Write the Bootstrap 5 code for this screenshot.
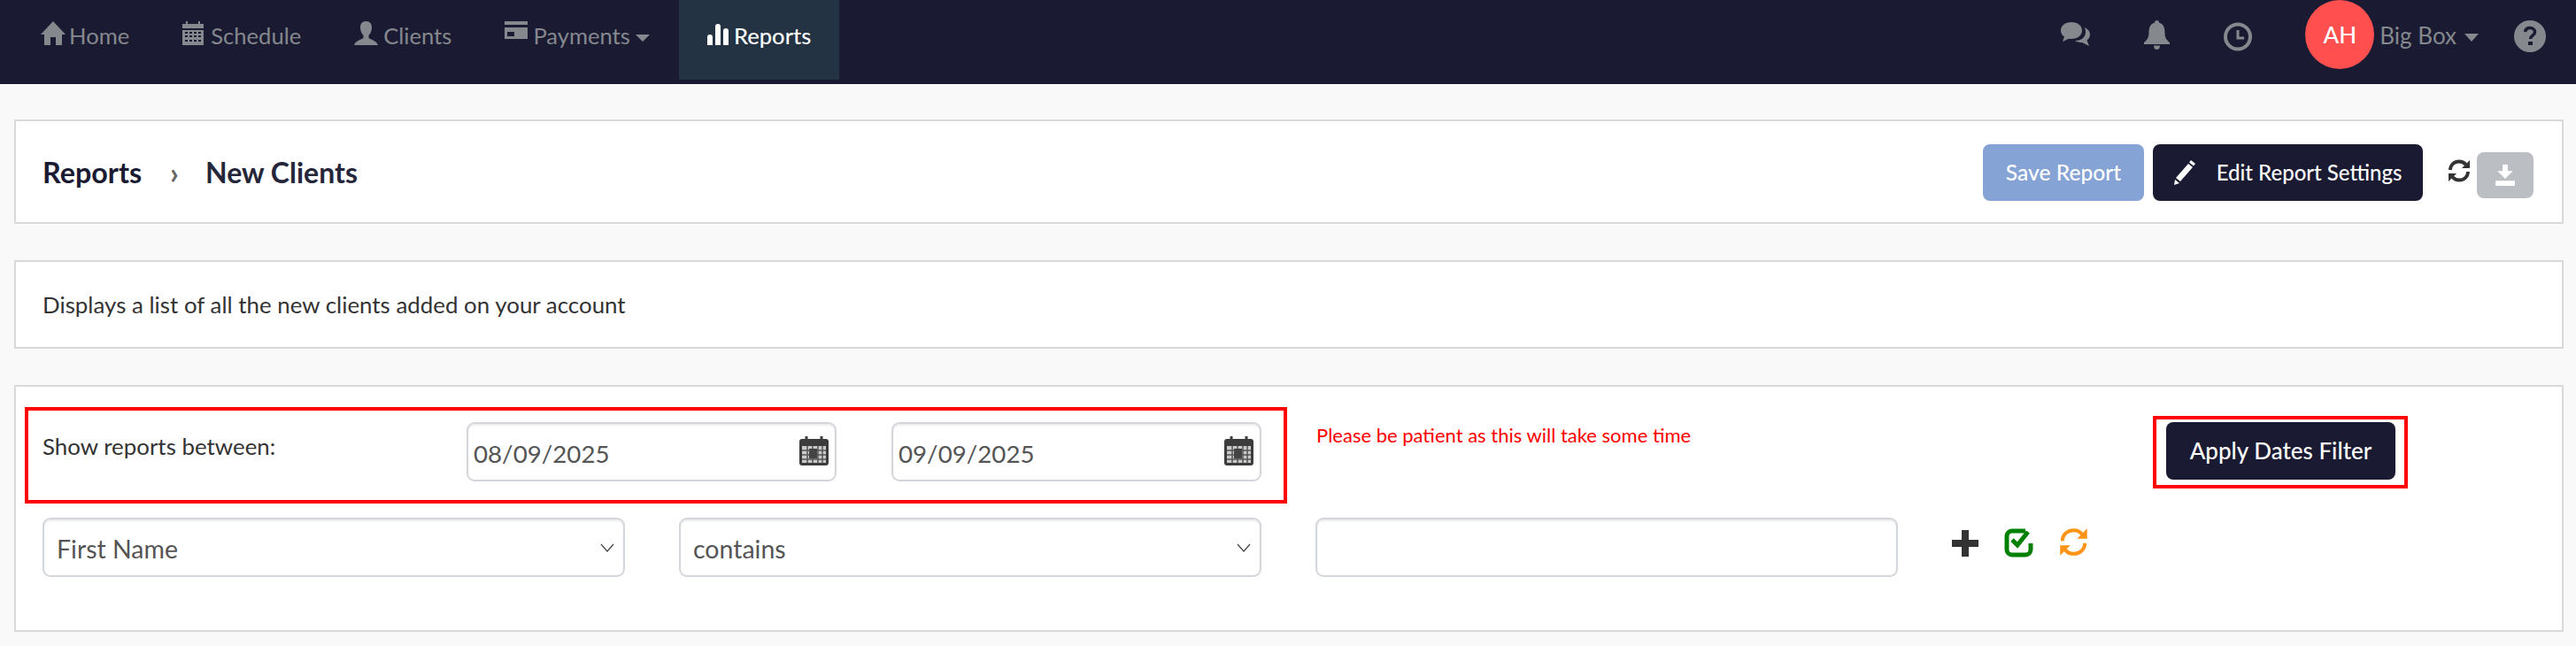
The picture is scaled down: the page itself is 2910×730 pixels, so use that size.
<!DOCTYPE html>
<html lang="en"><head><meta charset="utf-8"><title>New Clients</title>
<link rel="stylesheet" href="https://cdn.jsdelivr.net/npm/bootstrap@5.3.0/dist/css/bootstrap.min.css">
<style>
body{background:#f9f9f9;font-family:"Lato","Liberation Sans",sans-serif;color:#333;font-size:26px;min-width:2910px}
svg{display:block;flex:none}
.topbar{background:#1a1b33;height:95px;padding:0 34px 0 16px;display:flex;justify-content:space-between;align-items:flex-start;color:#85888c}
.topnav{display:flex;margin:0;padding:0;list-style:none}
.toplink{height:90px;padding:23px 30px 0;display:flex;gap:6px;align-items:flex-start;color:#85888c;text-decoration:none;line-height:34px;font-size:25.6px}
.toplink:hover{color:#85888c}
.toplink.current{background:#233343;color:#fff;padding:23px 32px 0 32px;font-weight:500}
.toplink svg{margin-top:1px}
.toplink .ico-home{margin-right:-2px}
.toplink .ico-sched{margin-right:2px}
.toplink .ico-caret{margin:16px 3px 0 0}
.toplink .ico-bars{margin-top:4px}
.rightnav{display:flex;align-items:flex-start}
.ico-chat{margin-top:25px}
.ico-bell{margin:23px 0 0 61px}
.ico-clock{margin:25px 0 0 61px}
.ico-help{margin:22px 0 0 40px}
.avatar{width:78px;height:78px;margin-left:60px;border-radius:50%;background:#ff4f4f;color:#fff;display:flex;align-items:center;justify-content:center;font-size:26px;font-weight:500}
.toplink.account{padding:23px 0 0 6px;height:auto;font-size:26px}
.toplink .ico-acaret{margin:15px 0 0 3px}
.panel{background:#fff;border:2px solid #d9d9d9;margin:0 14px 0 16px}
.panel-head{height:118px;margin-top:40px;padding:0 32px 0 30px;display:flex;align-items:center;justify-content:space-between}
.crumbs{font-size:32.3px;font-weight:700;color:#1a1b33;display:flex;align-items:center;margin-top:2px}
.crumbs .sep{color:#666;margin:0 30px 0 32px;font-weight:700;font-size:34px;line-height:1}
.crumbs .leaf{color:#25263a;font-size:32px}
.actions{display:flex;align-items:flex-start;margin-top:2px}
.btn-ink,.btn-save{height:64px;border-radius:8px;border:0;color:#fff;font-size:24.6px;font-weight:500;display:flex;align-items:center;justify-content:center;padding:0}
.btn-ink{background:#1a1b33}.btn-ink:hover{background:#1a1b33;color:#fff}
.btn-save{background:#85a3d4;width:182px;margin-right:10px}
.btn-edit{width:305px;gap:24px;margin-right:28px;font-size:24px}
.btn-dl{background:#bbbec2;width:64px;height:52px;border-radius:8px;display:flex;align-items:center;justify-content:center;margin:9px 0 0 7px;border:0;padding:0}
.spin{margin-top:17px}
.panel-desc{height:100px;margin-top:41px;padding:0 30px;display:flex;align-items:center;font-size:25.9px;color:#333}
.panel-filter{height:279px;margin-top:41px;padding:23px 0 0 10px}
.daterow{display:flex;align-items:flex-start}
.redbox{border:4px solid #f00}
.datebox{width:1426px;height:109px;padding:13px 25px 0 16px;display:flex}
.datebox .lbl{width:479px;line-height:34px;padding-top:10px;font-size:25.9px}
.datefield{position:relative;width:418px}
.datefield+.datefield{margin-left:62px}
.datefield svg{position:absolute;right:9px;top:16px}
.form-control,.form-select{height:67px;border:2px solid #d3d6da;border-radius:9px;font-size:27.7px;color:#555;box-shadow:inset 0 2px 2px rgba(0,0,0,.075);padding:4px 6px 0;font-family:inherit}
.form-select{font-size:28.5px;padding-left:14px;background-image:url("data:image/svg+xml,%3Csvg xmlns='http://www.w3.org/2000/svg' viewBox='0 0 16 10'%3E%3Cpath d='M1 1l7 8 7-8' fill='none' stroke='%23444' stroke-width='1.2'/%3E%3C/svg%3E");background-size:16px 10px;background-position:right 10px center}
.patience{color:#f00;font-size:22px;width:945px;margin-left:33px;padding-top:17px;line-height:30px}
.applybox{width:288px;height:82px;margin-top:10px;padding:3px 11px}
.btn-apply{width:259px;height:65px;font-size:26px}
.critrow{display:flex;margin-top:16px;padding-left:20px;gap:61px}
.critrow>.critcell{width:658px}
.tools{display:flex;gap:29px;align-items:flex-start;padding-top:14px}
.ico-check{margin-top:-2px}
.ico-sync{margin-top:-4px}
</style></head><body>

<nav class="topbar">
<ul class="topnav">
<li><a class="toplink" href="#"><svg class="ico-home" width="28" height="28" viewBox="0 0 28 28" fill="#85888c"><path d="M14 0L28 15h-4v12h-7v-9h-6v9H4V15H0z"/></svg>Home</a></li>
<li><a class="toplink" href="#"><svg class="ico-sched" width="24" height="27" viewBox="0 0 24 27" fill="#85888c"><path d="M4 0h2v3h12V0h2v3h4v5H0V3h4zM0 10h24v17H0zm3 2v2h3v-2zm5 0v2h3v-2zm5 0v2h3v-2zm5 0v2h3v-2zM3 16v2h3v-2zm5 0v2h3v-2zm5 0v2h3v-2zm5 0v2h3v-2zM3 21v2h3v-2zm5 0v2h3v-2zm5 0v2h3v-2zm5 0v2h3v-2z" fill-rule="evenodd"/></svg>Schedule</a></li>
<li><a class="toplink" href="#"><svg width="27" height="27" viewBox="0 0 27 27" fill="#85888c"><path d="M13.500 0c4.500 0 6.500 3 6.500 7 0 4-1.500 7-3.500 9v3c2 1.500 9 3 10.500 8H0c1.500-5 8.500-6.500 10.500-8v-3C8.500 14 7 11 7 7c0-4 2-7 6.500-7z"/></svg>Clients</a></li>
<li><a class="toplink" href="#"><svg width="26" height="20" viewBox="0 0 26 20" fill="#85888c"><path d="M0 0h26v4H0zM0 7h26v13H0zm3 5v5h8v-5z" fill-rule="evenodd"/></svg>Payments<svg class="ico-caret" width="16" height="8" viewBox="0 0 16 8" fill="#85888c"><path d="M0 0h16L8 8z"/></svg></a></li>
<li><a class="toplink current" href="#"><svg class="ico-bars" width="24" height="24" viewBox="0 0 24 24" fill="#fff"><path d="M0 15a3 3 0 0 1 6 0v9H0zM9 3a3 3 0 0 1 6 0v21H9zM18 8a3 3 0 0 1 6 0v16h-6z"/></svg>Reports</a></li>
</ul>
<div class="rightnav">
<svg class="ico-chat" width="33" height="27" viewBox="0 0 33 27" fill="#85888c"><path d="M12 0c7 0 12 4 12 9.500S19 19 12 19c-1 0-2 0-3-.2L2 22l2-5.500C1.500 15 0 12.500 0 9.500 0 4 5 0 12 0z"/><path d="M26.500 6c4 1.500 6.500 4.500 6.500 8 0 2.500-1.500 5-3.500 6.500L32 27l-8-4c-3 0-5.500-.5-8-2 6 0 12-3 12-10 0-2-.5-3.500-1.500-5z"/></svg>
<svg class="ico-bell" width="29" height="33" viewBox="0 0 29 33" fill="#85888c"><path d="M14.500 0c1.500 0 2.500 1 2.500 2.500 5 1.500 6.500 6 6.500 11 0 6 2 8.500 5.500 11.500v2H0v-2c3.500-3 5.500-5.500 5.500-11.500 0-5 1.500-9.500 6.500-11C12 1 13 0 14.500 0zM11 28.500h7c0 3-1.500 4.500-3.500 4.500S11 31.500 11 28.500z"/></svg>
<svg class="ico-clock" width="32" height="33" viewBox="0 0 32 33" fill="none" stroke="#85888c"><circle cx="16" cy="16.500" r="14" stroke-width="4"/><path d="M16 9v9h7" stroke-width="3"/></svg>
<div class="avatar">AH</div>
<a class="toplink account" href="#">Big Box<svg class="ico-acaret" width="16" height="9" viewBox="0 0 16 9" fill="#85888c"><path d="M0 0h16L8 9z"/></svg></a>
<svg class="ico-help" width="36" height="38" viewBox="0 0 36 38"><circle cx="18" cy="19" r="18" fill="#85888c"/><path d="M12.500 14c.5-3 2.500-4.500 5.500-4.500s5.500 1.800 5.500 4.700c0 4-5 4-5 7.800" fill="none" stroke="#1a1b33" stroke-width="3.500"/><path d="M16 25h5v4h-5z" fill="#1a1b33"/></svg>
</div>
</nav>

<section class="panel panel-head">
<div class="crumbs"><span>Reports</span><span class="sep">›</span><span class="leaf">New Clients</span></div>
<div class="actions">
<button class="btn-save" type="button">Save Report</button>
<button class="btn-ink btn-edit" type="button"><svg width="24" height="28" viewBox="0 0 24 28" fill="#fff"><path d="M19 0l5 4-2 2.500-5-4zM16 4l5 4L7 24l-5-4zM1 22l5 4-6 2z"/></svg>Edit Report Settings</button>
<svg class="spin" width="26" height="26" viewBox="0 0 26 26" fill="none" stroke="#333"><path d="M3 12C3 6.500 7.500 2.500 13 2.500c3 0 5.500 1 7.500 3.500M23 14c0 5.500-4.500 9.500-10 9.500-3 0-5.500-1-7.500-3.500" stroke-width="3.800"/><path d="M25 1v9h-9zM1 25v-9h9z" fill="#333" stroke="none"/></svg>
<button class="btn-dl" type="button" aria-label="Download"><svg width="22" height="24" viewBox="0 0 30 33" fill="#fff"><path d="M11 0h8v10h8L15 22 3 10h8zM0 25h30v8H0z"/></svg></button>
</div>
</section>

<section class="panel panel-desc">Displays a list of all the new clients added on your account</section>

<section class="panel panel-filter">
<div class="daterow">
<div class="redbox datebox">
<div class="lbl">Show reports between:</div>
<div class="datefield"><input class="form-control" type="text" value="08/09/2025" aria-label="From"><svg width="33" height="33" viewBox="0 0 33 33"><rect y="3" width="33" height="30" rx="3" fill="#3c3c3c"/><path d="M8 0v7M25 0v7" stroke="#3c3c3c" stroke-width="3"/><rect x="3" y="11" width="27" height="19" fill="#c9c9c9"/><path d="M3 16h27M3 21h27M3 26h27M9 11v19M15 11v19M21 11v19M26 11v19" stroke="#555" stroke-width="1.500"/><rect x="11" y="14" width="9" height="11" fill="#444"/></svg></div>
<div class="datefield"><input class="form-control" type="text" value="09/09/2025" aria-label="To"><svg width="33" height="33" viewBox="0 0 33 33"><rect y="3" width="33" height="30" rx="3" fill="#3c3c3c"/><path d="M8 0v7M25 0v7" stroke="#3c3c3c" stroke-width="3"/><rect x="3" y="11" width="27" height="19" fill="#c9c9c9"/><path d="M3 16h27M3 21h27M3 26h27M9 11v19M15 11v19M21 11v19M26 11v19" stroke="#555" stroke-width="1.500"/><rect x="11" y="14" width="9" height="11" fill="#444"/></svg></div>
</div>
<div class="patience">Please be patient as this will take some time</div>
<div class="redbox applybox"><button class="btn-ink btn-apply" type="button">Apply Dates Filter</button></div>
</div>
<div class="critrow">
<div class="critcell"><select class="form-select" aria-label="Field"><option>First Name</option></select></div>
<div class="critcell"><select class="form-select" aria-label="Condition"><option>contains</option></select></div>
<div class="critcell"><input class="form-control" type="text" aria-label="Value"></div>
<div class="tools">
<svg width="30" height="30" viewBox="0 0 30 30" fill="#333"><path d="M11 0h8v11h11v8H19v11h-8V19H0v-8h11z"/></svg>
<svg class="ico-check" width="33" height="33" viewBox="0 0 33 33" fill="none"><path d="M24 3H9a6 6 0 0 0-6 6v15a6 6 0 0 0 6 6h15a6 6 0 0 0 6-6v-7" stroke="green" stroke-width="5"/><path d="M9 13l6 6L27 4" stroke="green" stroke-width="5"/></svg>
<svg class="ico-sync" width="33" height="35" viewBox="0 0 26 26" fill="none" stroke="#ff9416"><path d="M3 12C3 6.500 7.500 2.500 13 2.500c3 0 5.500 1 7.500 3.500M23 14c0 5.500-4.500 9.500-10 9.500-3 0-5.500-1-7.500-3.500" stroke-width="3.200"/><path d="M25 1v9h-9zM1 25v-9h9z" fill="#ff9416" stroke="none"/></svg>
</div>
</div>
</section>
</body></html>
